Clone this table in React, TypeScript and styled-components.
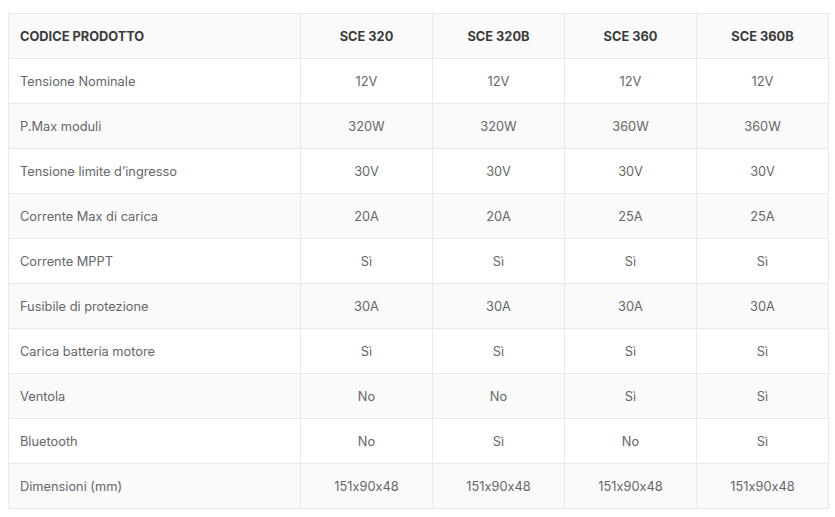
import React from "react";
import styled, { createGlobalStyle } from "styled-components";

const GlobalStyle = createGlobalStyle`
  html, body { margin: 0; padding: 0; background: #ffffff; }
  body {
    font-family: Inter, "Open Sans", sans-serif;
    font-feature-settings: "calt" 0;
  }
`;

const Wrapper = styled.div`
  padding: 13px 6px 0 8px;
`;

const Table = styled.table`
  width: 821px;
  border-collapse: collapse;
  table-layout: fixed;
  border: 1px solid #e9e9e9;
  font-size: 12.8px;
`;

const Row = styled.tr<{ $shaded: boolean }>`
  height: 45px;
  background: ${(p) => (p.$shaded ? "#fafafa" : "#ffffff")};
`;

const cellBase = `
  box-sizing: border-box;
  border: 1px solid #e9e9e9;
  padding: 0 11px;
  white-space: nowrap;
  &:first-child { width: 292px; text-align: left; }
  &:not(:first-child) { width: 132px; text-align: center; }
`;

const HeadCell = styled.th`
  ${cellBase}
  font-weight: 700;
  color: #3a3a3a;
  font-size: 12.8px;
`;

const Cell = styled.td`
  ${cellBase}
  font-weight: 400;
  color: #666666;
`;

const headers = ["SCE 320", "SCE 320B", "SCE 360", "SCE 360B"];

const rows: [string, string[]][] = [
  ["Tensione Nominale", ["12V", "12V", "12V", "12V"]],
  ["P.Max moduli", ["320W", "320W", "360W", "360W"]],
  ["Tensione limite d’ingresso", ["30V", "30V", "30V", "30V"]],
  ["Corrente Max di carica", ["20A", "20A", "25A", "25A"]],
  ["Corrente MPPT", ["Sì", "Sì", "Sì", "Sì"]],
  ["Fusibile di protezione", ["30A", "30A", "30A", "30A"]],
  ["Carica batteria motore", ["Sì", "Sì", "Sì", "Sì"]],
  ["Ventola", ["No", "No", "Sì", "Sì"]],
  ["Bluetooth", ["No", "Sì", "No", "Sì"]],
  ["Dimensioni (mm)", ["151x90x48", "151x90x48", "151x90x48", "151x90x48"]],
];

export default function App() {
  return (
    <>
      <GlobalStyle />
      <Wrapper>
        <Table>
          <thead>
            <Row $shaded>
              <HeadCell>CODICE PRODOTTO</HeadCell>
              {headers.map((h) => (
                <HeadCell key={h}>{h}</HeadCell>
              ))}
            </Row>
          </thead>
          <tbody>
            {rows.map(([label, vals], i) => (
              <Row key={label} $shaded={i % 2 === 1}>
                <Cell>{label}</Cell>
                {vals.map((v, j) => (
                  <Cell key={j}>{v}</Cell>
                ))}
              </Row>
            ))}
          </tbody>
        </Table>
      </Wrapper>
    </>
  );
}
